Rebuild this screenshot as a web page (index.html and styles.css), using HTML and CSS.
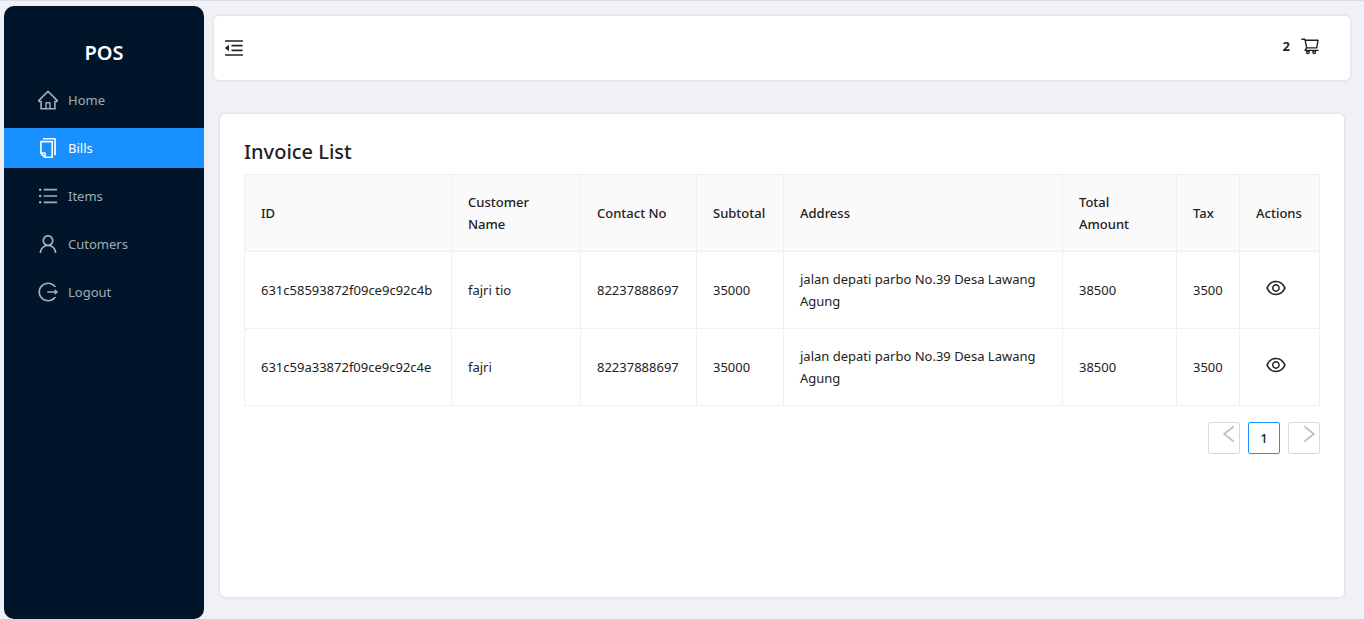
FILE: index.html
```html
<!DOCTYPE html>
<html lang="en">
<head>
<meta charset="utf-8">
<meta name="viewport" content="width=device-width, initial-scale=1">
<title>POS - Invoice List</title>
<link rel="stylesheet" href="styles.css">
</head>
<body>
<div class="layout">
  <aside class="sidebar">
    <h1 class="brand">POS</h1>
    <nav class="menu" aria-label="Main">
      <a class="menu-item" href="#home"><svg class="icon" viewBox="64 64 896 896" aria-hidden="true"><path d="M946.5 505L560.1 118.8l-25.9-25.9a31.5 31.5 0 00-44.4 0L77.5 505a63.9 63.9 0 00-18.8 46c.4 35.2 29.7 63.3 64.9 63.3h42.5V940h691.8V614.3h43.4c17.1 0 33.2-6.7 45.3-18.8a63.6 63.6 0 0018.7-45.3c0-17-6.7-33.1-18.8-45.2zM568 868H456V664h112v204zm217.9-325.7V868H632V640c0-22.1-17.9-40-40-40H432c-22.1 0-40 17.9-40 40v228H238.1V542.3h-96l370-369.7 23.1 23.1L882 542.3h-96.1z"/></svg>Home</a>
      <a class="menu-item active" href="#bills" aria-current="page"><svg class="icon" viewBox="64 64 896 896" aria-hidden="true"><path d="M832 64H296c-4.4 0-8 3.6-8 8v56c0 4.4 3.6 8 8 8h496v688c0 4.4 3.6 8 8 8h56c4.4 0 8-3.6 8-8V96c0-17.7-14.3-32-32-32zM704 192H192c-17.7 0-32 14.3-32 32v530.7c0 8.5 3.4 16.6 9.4 22.6l173.3 173.3c2.2 2.2 4.7 4 7.4 5.5v1.9h4.2c3.5 1.3 7.2 2 11 2H704c17.7 0 32-14.3 32-32V224c0-17.7-14.3-32-32-32zM350 856.2L263.9 770H350v86.2zM664 888H414V746c0-22.1-17.9-40-40-40H232V264h432v624z"/></svg>Bills</a>
      <a class="menu-item" href="#items"><svg class="icon" viewBox="64 64 896 896" aria-hidden="true"><path d="M912 192H328c-4.4 0-8 3.6-8 8v56c0 4.4 3.6 8 8 8h584c4.4 0 8-3.6 8-8v-56c0-4.4-3.6-8-8-8zm0 284H328c-4.4 0-8 3.6-8 8v56c0 4.4 3.6 8 8 8h584c4.4 0 8-3.6 8-8v-56c0-4.4-3.6-8-8-8zm0 284H328c-4.4 0-8 3.6-8 8v56c0 4.4 3.6 8 8 8h584c4.4 0 8-3.6 8-8v-56c0-4.4-3.6-8-8-8zM104 228a56 56 0 10112 0 56 56 0 10-112 0zm0 284a56 56 0 10112 0 56 56 0 10-112 0zm0 284a56 56 0 10112 0 56 56 0 10-112 0z"/></svg>Items</a>
      <a class="menu-item" href="#customers"><svg class="icon" viewBox="64 64 896 896" aria-hidden="true"><path d="M858.5 763.6a374 374 0 00-80.6-119.5 375.63 375.63 0 00-119.5-80.6c-.4-.2-.8-.3-1.2-.5C719.5 518 760 444.7 760 362c0-137-111-248-248-248S264 225 264 362c0 82.7 40.5 156 102.8 201.1-.4.2-.8.3-1.2.5-44.8 18.9-85 46-119.5 80.6a375.63 375.63 0 00-80.6 119.5A371.7 371.7 0 00136 901.8a8 8 0 008 8.2h60c4.4 0 7.9-3.5 8-7.8 2-77.2 33-149.5 87.8-204.3 56.7-56.7 132-87.9 212.2-87.9s155.5 31.2 212.2 87.9C779 752.7 810 825 812 902.2c.1 4.4 3.6 7.8 8 7.8h60a8 8 0 008-8.2c-1-47.8-10.9-94.3-29.5-138.2zM512 534c-45.9 0-89.1-17.9-121.6-50.4S340 407.9 340 362c0-45.9 17.9-89.1 50.4-121.6S466.1 190 512 190s89.1 17.9 121.6 50.4S684 316.1 684 362c0 45.9-17.9 89.1-50.4 121.6S557.9 534 512 534z"/></svg>Cutomers</a>
      <a class="menu-item" href="#logout"><svg class="icon" viewBox="64 64 896 896" aria-hidden="true"><path d="M868 732h-70.3c-4.8 0-9.3 2.1-12.3 5.8-7 8.5-14.5 16.7-22.4 24.5a353.84 353.84 0 01-112.7 75.9A352.8 352.8 0 01512.4 866c-47.9 0-94.3-9.4-137.9-27.8a353.84 353.84 0 01-112.7-75.9 353.28 353.28 0 01-76-112.5C167.3 606.2 158 559.9 158 512s9.4-94.2 27.8-137.8c17.8-42.1 43.4-80 76-112.5s70.5-58.1 112.7-75.9c43.6-18.4 90-27.8 137.9-27.8 47.9 0 94.3 9.3 137.9 27.8 42.2 17.8 80.1 43.4 112.7 75.9 7.9 7.9 15.3 16.1 22.4 24.5 3 3.7 7.6 5.8 12.3 5.8H868c6.3 0 10.2-7 6.7-12.3C798 160.5 663.8 81.6 511.3 82 271.7 82.6 79.6 277.1 82 516.4 84.4 751.9 276.2 942 512.4 942c152.1 0 285.7-78.8 362.3-197.7 3.4-5.3-.4-12.3-6.7-12.3zm88.9-226.3L815 393.7c-5.3-4.2-13-.4-13 6.3v76H488c-4.4 0-8 3.6-8 8v56c0 4.4 3.6 8 8 8h314v76c0 6.7 7.8 10.5 13 6.3l141.9-112a8 8 0 000-12.6z"/></svg>Logout</a>
    </nav>
  </aside>

  <div class="page">
    <header class="topbar">
      <button class="icon-button" type="button" aria-label="Collapse menu"><svg class="icon" viewBox="64 64 896 896" aria-hidden="true"><path d="M408 442h480c4.4 0 8-3.6 8-8v-56c0-4.4-3.6-8-8-8H408c-4.4 0-8 3.6-8 8v56c0 4.4 3.6 8 8 8zm-8 204c0 4.4 3.6 8 8 8h480c4.4 0 8-3.6 8-8v-56c0-4.4-3.6-8-8-8H408c-4.4 0-8 3.6-8 8v56zm504-486H120c-4.4 0-8 3.6-8 8v56c0 4.4 3.6 8 8 8h784c4.4 0 8-3.6 8-8v-56c0-4.4-3.6-8-8-8zm0 632H120c-4.4 0-8 3.6-8 8v56c0 4.4 3.6 8 8 8h784c4.4 0 8-3.6 8-8v-56c0-4.4-3.6-8-8-8zM115.4 518.9L271.7 642c5.8 4.6 14.4.5 14.4-6.9V388.9c0-7.4-8.5-11.5-14.4-6.9L115.4 505.1a8.74 8.74 0 000 13.8z"/></svg></button>
      <a class="cart" href="#cart" aria-label="Cart, 2 items"><span>2</span><svg class="icon" viewBox="0 0 1024 1024" aria-hidden="true"><path d="M922.9 701.9H327.4l29.9-60.9 496.8-.9c16.8 0 31.2-12 34.2-28.6l68.8-385.1c1.8-10.1-.9-20.5-7.5-28.4a34.99 34.99 0 00-26.6-12.5l-632-2.1-5.4-25.4c-3.4-16.2-18-28-34.6-28H96.5a35.3 35.3 0 100 70.6h125.9L246 312.8l58.1 281.3-74.8 122.1a34.96 34.96 0 00-3 36.8c6 11.9 18.1 19.4 31.5 19.4h62.8a102.43 102.43 0 00-20.6 61.7c0 56.6 46 102.6 102.6 102.6s102.6-46 102.6-102.6c0-22.3-7.4-44-20.6-61.7h161.1a102.43 102.43 0 00-20.6 61.7c0 56.6 46 102.6 102.6 102.6s102.6-46 102.6-102.6c0-22.3-7.4-44-20.6-61.7H923c19.4 0 35.3-15.8 35.3-35.3a35.42 35.42 0 00-35.4-35.2zM305.7 253l575.8 1.9-56.4 315.8-452.3.8L305.7 253zm96.9 612.7c-17.4 0-31.6-14.2-31.6-31.6 0-17.4 14.2-31.6 31.6-31.6s31.6 14.2 31.6 31.6a31.6 31.6 0 01-31.6 31.6zm325.1 0c-17.4 0-31.6-14.2-31.6-31.6 0-17.4 14.2-31.6 31.6-31.6s31.6 14.2 31.6 31.6a31.6 31.6 0 01-31.6 31.6z"/></svg></a>
    </header>

    <main class="content">
      <h2 class="title">Invoice List</h2>
      <table class="invoices">
        <colgroup>
          <col class="col-id"><col class="col-name"><col class="col-contact"><col class="col-subtotal"><col class="col-address"><col class="col-total"><col class="col-tax"><col class="col-actions">
        </colgroup>
        <thead>
          <tr><th scope="col">ID</th><th scope="col">Customer Name</th><th scope="col">Contact No</th><th scope="col">Subtotal</th><th scope="col">Address</th><th scope="col">Total Amount</th><th scope="col">Tax</th><th scope="col">Actions</th></tr>
        </thead>
        <tbody>
          <tr>
            <td>631c58593872f09ce9c92c4b</td><td>fajri tio</td><td>82237888697</td><td>35000</td><td>jalan depati parbo No.39 Desa Lawang Agung</td><td>38500</td><td>3500</td>
            <td><button class="icon-button view" type="button" aria-label="View invoice"><svg class="icon" viewBox="64 64 896 896" aria-hidden="true"><path d="M942.2 486.2C847.4 286.5 704.1 186 512 186c-192.2 0-335.4 100.5-430.2 300.3a60.3 60.3 0 000 51.5C176.6 737.5 319.9 838 512 838c192.2 0 335.4-100.5 430.2-300.3 7.7-16.2 7.7-35 0-51.5zM512 766c-161.3 0-279.4-81.8-362.7-254C232.6 339.8 350.7 258 512 258c161.3 0 279.4 81.8 362.7 254C791.5 684.2 673.4 766 512 766zm-4-430c-97.2 0-176 78.8-176 176s78.8 176 176 176 176-78.8 176-176-78.8-176-176-176zm0 288c-61.9 0-112-50.1-112-112s50.1-112 112-112 112 50.1 112 112-50.1 112-112 112z"/></svg></button></td>
          </tr>
          <tr>
            <td>631c59a33872f09ce9c92c4e</td><td>fajri</td><td>82237888697</td><td>35000</td><td>jalan depati parbo No.39 Desa Lawang Agung</td><td>38500</td><td>3500</td>
            <td><button class="icon-button view" type="button" aria-label="View invoice"><svg class="icon" viewBox="64 64 896 896" aria-hidden="true"><path d="M942.2 486.2C847.4 286.5 704.1 186 512 186c-192.2 0-335.4 100.5-430.2 300.3a60.3 60.3 0 000 51.5C176.6 737.5 319.9 838 512 838c192.2 0 335.4-100.5 430.2-300.3 7.7-16.2 7.7-35 0-51.5zM512 766c-161.3 0-279.4-81.8-362.7-254C232.6 339.8 350.7 258 512 258c161.3 0 279.4 81.8 362.7 254C791.5 684.2 673.4 766 512 766zm-4-430c-97.2 0-176 78.8-176 176s78.8 176 176 176 176-78.8 176-176-78.8-176-176-176zm0 288c-61.9 0-112-50.1-112-112s50.1-112 112-112 112 50.1 112 112-50.1 112-112 112z"/></svg></button></td>
          </tr>
        </tbody>
      </table>
      <nav class="pagination" aria-label="Pagination">
        <button class="page-arrow" type="button" disabled aria-label="Previous page"><svg class="icon" viewBox="64 64 896 896" aria-hidden="true"><path d="M724 218.3V141c0-6.7-7.7-10.4-12.9-6.3L260.3 486.8a31.86 31.86 0 000 50.3l450.8 352.1c5.3 4.1 12.9.4 12.9-6.3v-77.3c0-4.9-2.3-9.6-6.1-12.6l-360-281 360-281.1c3.8-3 6.1-7.7 6.1-12.6z"/></svg></button>
        <button class="page-number" type="button" aria-current="page">1</button>
        <button class="page-arrow" type="button" disabled aria-label="Next page"><svg class="icon" viewBox="64 64 896 896" aria-hidden="true"><path d="M765.7 486.8L314.9 134.7A7.97 7.97 0 00302 141v77.3c0 4.9 2.3 9.6 6.1 12.6l360 281.1-360 281.1c-3.9 3-6.1 7.7-6.1 12.6V883c0 6.7 7.7 10.4 12.9 6.3l450.8-352.1a31.96 31.96 0 000-50.4z"/></svg></button>
      </nav>
    </main>
  </div>
</div>
</body>
</html>
```
FILE: styles.css
```css
* {
  box-sizing: border-box;
}

body {
  margin: 0;
  background: #f0f1f6;
  color: #222;
  font-family: "Noto Sans", "Open Sans", sans-serif;
  font-size: 13px;
  line-height: 22px;
}

button {
  margin: 0;
  font: inherit;
  color: inherit;
}

.layout {
  display: flex;
  min-height: 100vh;
  padding: 5px 0 0 4px;
  border-top: 1px solid #dcdde2;
}

.icon {
  display: block;
  flex: none;
  width: 20px;
  height: 20px;
  fill: currentColor;
}

.sidebar {
  flex: none;
  width: 200px;
  border-radius: 10px;
  background: #001529;
}

.brand {
  margin: 0;
  padding: 32px 0 12px;
  color: #fff;
  font-size: 20px;
  font-weight: 600;
  line-height: 30px;
  text-align: center;
}

.menu {
  display: flex;
  flex-direction: column;
  gap: 8px;
}

.menu-item {
  display: flex;
  align-items: center;
  gap: 10px;
  height: 40px;
  padding-left: 34px;
  color: rgba(255, 255, 255, 0.65);
  text-decoration: none;
}

.menu-item.active {
  background: #1890ff;
  color: #fff;
}

.page {
  flex: 1;
  min-width: 0;
  padding: 10px 14px 22px 10px;
}

.topbar,
.content {
  border-radius: 5px;
  background: #fff;
  box-shadow: 0 0 3px rgba(0, 0, 0, 0.15);
}

.topbar {
  display: flex;
  align-items: center;
  justify-content: space-between;
  height: 64px;
  padding: 0 30px 0 10px;
}

.icon-button {
  padding: 0;
  border: 0;
  background: none;
  cursor: pointer;
}

.cart {
  display: flex;
  align-items: center;
  gap: 10px;
  padding-bottom: 4px;
  color: inherit;
  font-weight: 700;
  text-decoration: none;
}

.content {
  min-height: 78vh;
  margin: 34px 6px 0;
  padding: 24px;
}

.title {
  margin: 0 0 8px;
  font-size: 20px;
  font-weight: 500;
  line-height: 28px;
}

.invoices {
  width: 100%;
  table-layout: fixed;
  border-collapse: collapse;
}

.col-id { width: 207px; }
.col-name { width: 129px; }
.col-contact { width: 116px; }
.col-subtotal { width: 87px; }
.col-address { width: 279px; }
.col-total { width: 114px; }
.col-tax { width: 63px; }
.col-actions { width: 80px; }

.invoices th,
.invoices td {
  height: 77px;
  padding: 16px;
  border: 1px solid #f0f0f0;
  text-align: left;
  vertical-align: middle;
}

.invoices th {
  background: #fafafa;
  font-weight: 500;
}

.view {
  display: block;
  padding: 0 10px 4px;
}

.pagination {
  display: flex;
  justify-content: flex-end;
  gap: 8px;
  margin-top: 16px;
}

.page-arrow,
.page-number {
  width: 32px;
  height: 32px;
  padding: 0;
  border: 1px solid #d9d9d9;
  border-radius: 2px;
  background: #fff;
}

.page-arrow {
  display: flex;
  justify-content: flex-end;
  padding-top: 1px;
  color: #bfbfbf;
}

.page-number {
  border-color: #1890ff;
  font-weight: 500;
}
```
